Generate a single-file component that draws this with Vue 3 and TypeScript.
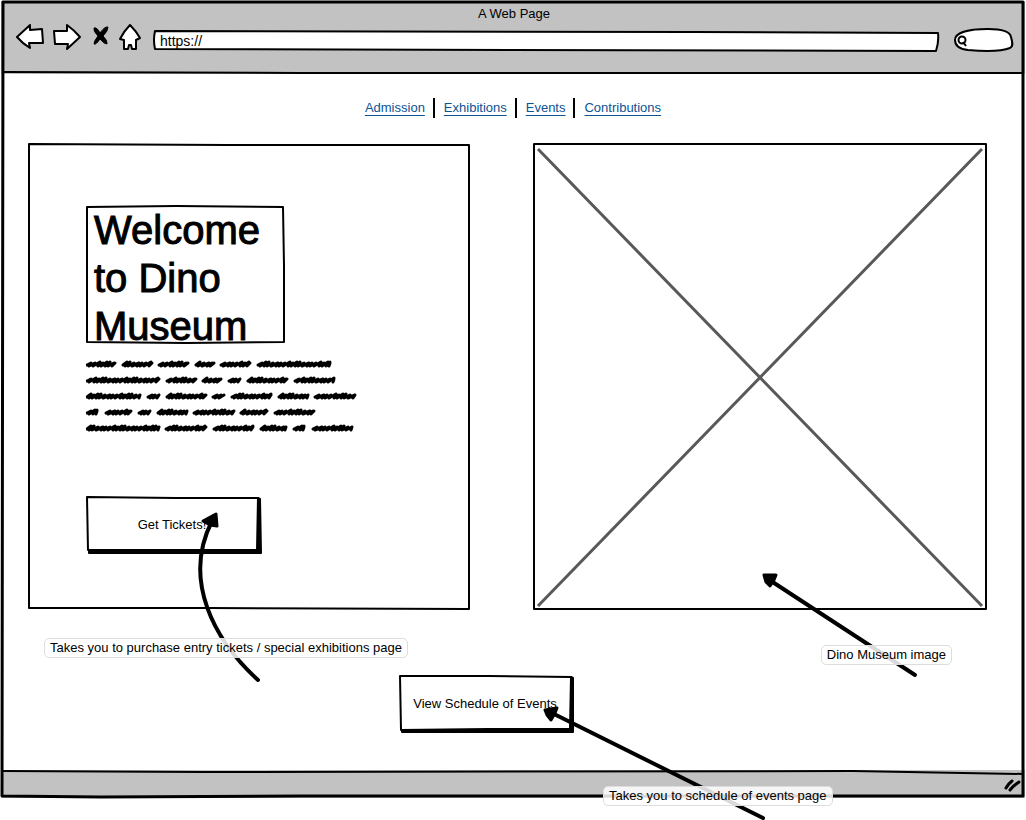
<script setup lang="ts">
import { ref } from 'vue'

const url = ref('https://')
const query = ref('')
const links: string[] = ['Admission', 'Exhibitions', 'Events', 'Contributions']

// Each row lists [start, end] of the scribbled words.
const rows: number[][][] = [
  [[0, 30], [36, 67], [72, 103], [109, 129], [134, 165], [171, 245]],
  [[0, 74], [80, 111], [116, 136], [142, 155], [161, 202], [208, 249]],
  [[0, 55], [61, 74], [80, 121], [126, 139], [145, 186], [192, 223], [228, 270]],
  [[0, 12], [19, 46], [52, 65], [71, 102], [107, 149], [154, 182], [188, 229]],
  [[0, 74], [79, 121], [127, 168], [174, 201], [207, 219], [226, 267]],
]

const rise = [1, 1, 2, 1, 2, 2, 1, 1]
const step = [4, 5, 3, 4, 3, 4, 5, 3]

function scribble(start: number, end: number, row: number): string {
  const y = 6 + row * 16
  let x = start + 1
  let i = start + row
  let d = `M${x} ${y + 1}`
  while (x < end - 3) {
    const k = i % 8
    d += `L${Math.min(x + 4, end - 1)} ${y - rise[k]}L${x + 2} ${y + 2}`
    x += step[k]
    i++
  }
  return d + `L${end - 1} ${y - 1}`
}

const words: string[] = rows.flatMap((row, r) => row.map(([a, b]) => scribble(a, b, r)))
</script>

<template>
  <div class="browser">
    <header class="chrome">
      <svg class="sketch" viewBox="0 0 1022 72" preserveAspectRatio="none" aria-hidden="true">
        <path d="M1 70 L300 71 L1021 71" />
      </svg>
      <div class="title">A Web Page</div>
      <div class="toolbar">
        <button class="tool" type="button" aria-label="Back">
          <svg width="30" height="28" viewBox="0 0 30 28">
            <path class="outline" d="M3 13 L16 1 L16 6 L28 5 L29 19 L15 19 L16 24 Q8 19 3 13Z" />
          </svg>
        </button>
        <button class="tool forward" type="button" aria-label="Forward">
          <svg width="30" height="28" viewBox="0 0 30 28">
            <path class="outline" d="M2 7 L15 7 L15 1 Q22 6 28 13 L15 25 L16 20 L3 20Z" />
          </svg>
        </button>
        <button class="tool stop" type="button" aria-label="Stop">
          <svg width="18" height="28" viewBox="0 0 18 28">
            <path class="solid" d="M2 4 Q5 3 8 9 Q13 2 16 3 Q16 7 11 12 Q16 17 15 20 Q12 20 8 15 Q4 21 2 20 Q2 17 6 12 Q1 7 2 4Z" />
          </svg>
        </button>
        <button class="tool home" type="button" aria-label="Home">
          <svg width="24" height="28" viewBox="0 0 24 28">
            <path class="outline" d="M12 1 Q18 7 22 14 L18 16 L18 25 L14 25 L13 21 L11 21 L10 25 L6 25 L6 16 L2 15 Q6 7 12 1Z" />
          </svg>
        </button>
        <div class="address">
          <svg class="sketch" viewBox="0 0 785 22" preserveAspectRatio="none" aria-hidden="true">
            <path class="paper" d="M2 1 L540 2 L784 3 Q785 12 782 21 L2 19 Q0 10 2 1Z" />
          </svg>
          <input v-model="url" type="text" aria-label="Address">
        </div>
        <div class="search">
          <svg class="sketch" viewBox="0 0 60 24" preserveAspectRatio="none" aria-hidden="true">
            <path class="paper" d="M1 12 C1 4 16 1 34 1 C46 1 56 3 57 9 C59 16 59 19 56 20 C46 24 26 23 14 22 C5 21 1 18 1 12Z" />
          </svg>
          <svg class="lens" width="12" height="14" viewBox="0 0 12 14" aria-hidden="true">
            <circle cx="5" cy="6" r="3.5" />
            <path d="M6 8 L9 12" />
          </svg>
          <input v-model="query" type="text" aria-label="Search">
        </div>
      </div>
    </header>

    <main>
      <nav>
        <a v-for="link in links" :key="link" href="#">{{ link }}</a>
      </nav>

      <div class="panels">
        <section class="panel welcome">
          <svg class="sketch" viewBox="0 0 442 465" preserveAspectRatio="none" aria-hidden="true">
            <path d="M1 1 L200 2 L441 2 L441 464 L180 463 L1 463 Z" />
          </svg>
          <div class="headline">
            <svg class="sketch" viewBox="0 0 199 138" preserveAspectRatio="none" aria-hidden="true">
              <path d="M1 2 L90 1 L197 2 L198 60 L198 136 L100 137 L1 136 Z" />
            </svg>
            <h1>Welcome to Dino Museum</h1>
          </div>
          <svg class="copy" width="272" height="76" viewBox="0 0 272 76" aria-hidden="true">
            <path v-for="(word, i) in words" :key="i" :d="word" />
          </svg>
          <div class="action">
            <button class="cta" type="button">
              <svg class="sketch" viewBox="0 0 176 58" preserveAspectRatio="none" aria-hidden="true">
                <path class="shade" d="M3 54 L172 54 L172 2 L174 3 L175 57 L3 57Z" />
                <path class="paper" d="M1 1 L90 2 L172 2 L171 54 L90 54 L2 54Z" />
              </svg>
              <span>Get Tickets!</span>
            </button>
            <svg class="arrow arrow-tickets" width="80" height="174" viewBox="0 0 80 174" aria-hidden="true">
              <path class="shaft" d="M68 170 C24 130 -8 70 22 11" />
              <path class="head" d="M26 4 L27 16 L20 15 L13 11Z" />
            </svg>
            <p class="hint hint-tickets">Takes you to purchase entry tickets / special exhibitions page</p>
          </div>
        </section>

        <section class="panel picture">
          <svg class="sketch" viewBox="0 0 454 465" preserveAspectRatio="none" role="img" aria-label="Dino Museum image">
            <path class="cross" d="M5 6 L449 461 M449 6 L5 461" />
            <path d="M1 1 L453 1 L453 464 L230 464 L1 464Z" />
          </svg>
          <svg class="arrow arrow-picture" width="158" height="106" viewBox="0 0 158 106" aria-hidden="true">
            <path class="shaft" d="M6 7 L153 103" />
            <path class="head" d="M2 3 L14 3 L12 8 L8 14 L4 10Z" />
          </svg>
          <p class="hint hint-picture">Dino Museum image</p>
        </section>
      </div>

      <div class="schedule">
        <div class="action">
          <button class="cta" type="button">
            <svg class="sketch" viewBox="0 0 176 58" preserveAspectRatio="none" aria-hidden="true">
              <path class="shade" d="M3 54 L172 54 L172 2 L174 3 L174 57 L3 57Z" />
              <path class="paper" d="M1 1 L90 1 L172 2 L171 54 L90 54 L2 55Z" />
            </svg>
            <span>View Schedule of Events</span>
          </button>
          <svg class="arrow arrow-schedule" width="224" height="114" viewBox="0 0 224 114" aria-hidden="true">
            <path class="shaft" d="M6 5 L221 112" />
            <path class="head" d="M3 4 L15 2 L13 7 L9 14 L5 9Z" />
          </svg>
          <p class="hint hint-schedule">Takes you to schedule of events page</p>
        </div>
      </div>
    </main>

    <footer>
      <svg class="sketch" viewBox="0 0 1022 28" preserveAspectRatio="none" aria-hidden="true">
        <path d="M1 1 L200 2 L850 1 L1021 4" />
      </svg>
      <svg class="grip" width="18" height="16" viewBox="0 0 18 16" aria-hidden="true">
        <path d="M2 10 Q4 6 8 3 M6 12 Q9 8 15 4" />
      </svg>
    </footer>
    <svg class="sketch outer" viewBox="0 0 1024 797" preserveAspectRatio="none" aria-hidden="true">
      <path d="M2 1 L1022 1 L1022 795 L300 795 L100 796 L1 795Z" />
    </svg>
  </div>
</template>

<style>
body {
  margin: 0;
  background: #fff;
}
</style>

<style scoped>
.browser {
  position: relative;
  margin: 1px 1px 22px;
  font-family: "Liberation Sans", Arial, sans-serif;
  font-size: 13px;
  line-height: 20px;
  color: #000;
}

.sketch {
  position: absolute;
  inset: 0;
  width: 100%;
  height: 100%;
  overflow: visible;
  pointer-events: none;
}

.sketch path {
  fill: none;
  stroke: #000;
  stroke-width: 2px;
  stroke-linejoin: round;
  vector-effect: non-scaling-stroke;
}

.sketch .paper {
  fill: #fff;
}

.sketch .shade {
  fill: #000;
}

.sketch .cross {
  stroke: #595959;
  stroke-width: 3px;
}

.outer path {
  stroke-width: 3px;
}

.chrome {
  position: relative;
  padding: 3px 11px 22px 13px;
  background: #c2c2c2;
}

.title {
  text-align: center;
}

.toolbar {
  display: flex;
  align-items: flex-end;
  height: 28px;
}

button {
  font: inherit;
  color: inherit;
  padding: 0;
  border: 0;
  background: none;
}

.tool {
  display: block;
  height: 28px;
}

.tool svg {
  display: block;
}

.tool .outline {
  fill: #fff;
  stroke: #000;
  stroke-width: 2px;
  stroke-linejoin: round;
}

.tool .solid {
  stroke: #000;
  stroke-width: 1px;
  stroke-linejoin: round;
}

.forward {
  margin-left: 8px;
}

.stop {
  margin-left: 10px;
}

.home {
  margin-left: 8px;
}

.address {
  position: relative;
  flex: 1;
  height: 22px;
  margin-left: 11px;
}

.search {
  position: relative;
  width: 60px;
  height: 24px;
  margin-left: 15px;
}

input {
  position: relative;
  box-sizing: border-box;
  width: 100%;
  height: 22px;
  padding: 0 7px;
  border: 0;
  outline: 0;
  background: transparent;
  font: inherit;
  font-size: 14px;
  color: inherit;
}

.search input {
  padding-left: 18px;
}

.lens {
  position: absolute;
  left: 3px;
  top: 6px;
  fill: none;
  stroke: #000;
  stroke-width: 2px;
}

main {
  padding: 24px 38px 0 27px;
}

nav {
  display: flex;
  justify-content: center;
  margin-left: 11px;
  margin-bottom: 25px;
}

nav a {
  color: #0b5394;
  text-decoration: underline;
  text-underline-offset: 3px;
}

nav a + a {
  margin-left: 8px;
  padding-left: 9px;
  border-left: 2px solid #000;
}

.panels {
  display: grid;
  grid-template-columns: 442fr 454fr;
  gap: 63px;
}

.panel {
  position: relative;
}

.welcome {
  padding: 62px 20px 56px 58px;
}

.headline {
  position: relative;
  width: 199px;
  height: 139px;
}

h1 {
  position: relative;
  margin: 0;
  padding: 1px 16px 0 8px;
  font-size: 40px;
  font-weight: 400;
  line-height: 48px;
  -webkit-text-stroke: 1px #000;
  stroke-linejoin: round;
}

.copy {
  display: block;
  margin: 14px 0 62px;
  max-width: 100%;
}

.copy path {
  fill: none;
  stroke: #000;
  stroke-width: 3px;
  stroke-linecap: round;
  stroke-linejoin: round;
}

.action {
  position: relative;
  width: 176px;
}

.cta {
  position: relative;
  display: block;
  width: 100%;
  height: 58px;
  padding-right: 4px;
}

.cta span {
  position: relative;
}

.arrow {
  position: absolute;
  z-index: 2;
  fill: none;
  stroke: #000;
  stroke-linecap: round;
  stroke-linejoin: round;
  pointer-events: none;
}

.shaft {
  stroke-width: 4px;
}

.head {
  fill: #000;
  stroke-width: 3px;
}

.hint {
  position: absolute;
  z-index: 3;
  margin: 0;
  padding: 0 5px;
  border: 1px solid #ddd;
  border-radius: 5px;
  background: rgba(255, 255, 255, 0.85);
  line-height: 18px;
  white-space: nowrap;
}

.arrow-tickets {
  left: 104px;
  top: 14px;
}

.hint-tickets {
  left: -42px;
  top: 142px;
}

.arrow-picture {
  right: 67px;
  bottom: -68px;
}

.hint-picture {
  right: 35px;
  bottom: -55px;
}

.schedule {
  display: flex;
  justify-content: center;
  margin: 65px 41px 0 0;
  padding-bottom: 37px;
}

.arrow-schedule {
  left: 143px;
  top: 31px;
}

.hint-schedule {
  left: 204px;
  top: 111px;
}

footer {
  position: relative;
  display: flex;
  justify-content: flex-end;
  box-sizing: border-box;
  height: 28px;
  padding: 8px 3px 0 0;
  background: #c2c2c2;
}

.grip {
  fill: none;
  stroke: #000;
  stroke-width: 3px;
  stroke-linecap: round;
}
</style>
